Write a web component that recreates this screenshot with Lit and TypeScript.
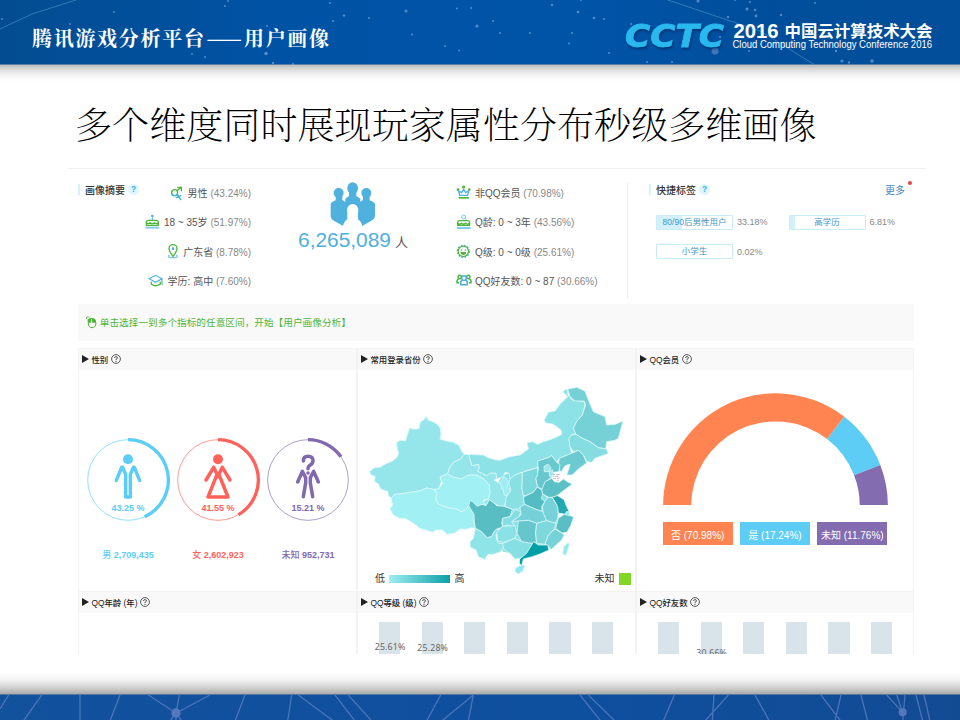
import { LitElement, html, svg, css, nothing } from "lit";
import { customElement, property } from "lit/decorators.js";

const GREEN = "#4db53c";
const BLUE = "#4fb0dc";

/* ---------- icons ---------- */
const icons: Record<string, { box: string; w: number; h: number; art: unknown }> = {
  gender: {
    box: "300 72 42 48", w: 14, h: 16,
    art: svg`<g fill="none" stroke-width="4">
      <circle cx="314" cy="95" r="9" stroke=${GREEN}/><path d="M320 89L332 80M322 79H334V91" stroke=${GREEN}/>
      <path d="M305 96A9 9 0 0 0 322 99L330 112M317 111L334 103M320 103L334 117" stroke=${BLUE}/></g>`,
  },
  cake: {
    box: "227 163 45 45", w: 15, h: 15,
    art: svg`<circle cx="249" cy="169" r="4" fill=${BLUE}/><path d="M249 173V182" stroke=${BLUE} stroke-width="3"/>
      <path d="M231 198V188Q231 182 238 182H260Q267 182 267 188V198M231 189Q237 195 242 189Q249 195 255 189Q262 195 267 189M231 197H267" fill="none" stroke=${GREEN} stroke-width="4"/>
      <rect x="228" y="201" width="42" height="6" fill="#86cbea"/>`,
  },
  pin: {
    box: "290 250 35 45", w: 11.7, h: 15,
    art: svg`<path d="M297 283Q290 290 300 291H315Q325 290 318 283" fill="none" stroke="#7cc6e6" stroke-width="4"/>
      <path d="M308 287Q296 271 296 264A12 12 0 0 1 320 264Q320 271 308 287Z" fill="#fff" stroke=${GREEN} stroke-width="4"/>
      <circle cx="308" cy="264" r="4" fill=${BLUE}/>`,
  },
  hat: {
    box: "239 339 46 40", w: 15.3, h: 13.3,
    art: svg`<path d="M249 362V369Q262 380 276 369V362" fill="none" stroke=${GREEN} stroke-width="4"/>
      <path d="M242 353L262 343L281 353L262 364ZM281 354V373" fill="none" stroke=${BLUE} stroke-width="3.5"/>`,
  },
  crown: {
    box: "138 76 46 44", w: 15.3, h: 14.7,
    art: svg`<g fill=${GREEN}><circle cx="161" cy="82" r="4.5"/><circle cx="144" cy="90" r="4"/><circle cx="178" cy="90" r="4"/><rect x="146" y="112" width="31" height="5"/></g>
      <path d="M149 107L146 94L155 99L161 89L167 99L176 94L173 107Z" fill="none" stroke=${BLUE} stroke-width="4"/>`,
  },
  qcake: {
    box: "138 162 46 47", w: 15.3, h: 15.7,
    art: svg`<circle cx="161" cy="171" r="6" fill="none" stroke="#7cc6e6" stroke-width="3"/><path d="M163 173L169 179" stroke="#7cc6e6" stroke-width="3"/>
      <path d="M143 197V188Q143 182 150 182H172Q179 182 179 188V197M143 190Q150 195 155 190Q161 195 167 190Q173 195 179 190M142 196H180" fill="none" stroke=${GREEN} stroke-width="4"/>
      <rect x="141" y="201" width="41" height="6" fill="#86cbea"/>`,
  },
  smile: {
    box: "139 251 44 44", w: 14.7, h: 14.7,
    art: svg`<circle cx="161" cy="273" r="18" fill="none" stroke=${BLUE} stroke-width="4" stroke-dasharray="5 4.4"/>
      <circle cx="161" cy="273" r="15.5" fill="none" stroke=${GREEN} stroke-width="3.5"/>
      <circle cx="155" cy="269" r="2.2" fill=${GREEN}/><circle cx="167" cy="269" r="2.2" fill=${GREEN}/>
      <path d="M152 275H170Q168 284 161 284Q154 284 152 275Z" fill=${GREEN}/>`,
  },
  friends: {
    box: "137 343 48 37", w: 16, h: 12.3,
    art: svg`<g fill="none" stroke-width="4.500"><g stroke=${GREEN}><circle cx="148" cy="352" r="5"/><path d="M145 357Q138 362 140 369H146"/>
      <circle cx="174" cy="352" r="5"/><path d="M177 357Q184 362 182 369H176"/></g>
      <g stroke=${BLUE}><circle cx="161" cy="355" r="7"/><path d="M156 361Q149 366 151 375H171Q173 366 166 361"/></g></g>`,
  },
  mouse: {
    box: "47 465 34 38", w: 11.3, h: 12.7,
    art: svg`<path d="M54 480Q54 472 65 472Q77 473 77 486Q76 500 65 500Q54 500 54 486Z" fill="none" stroke=${GREEN} stroke-width="3"/>
      <path d="M65 472H68Q77 473 77 485H65ZM51 476L62 471V485H54Z" fill=${GREEN}/><path d="M49 474V468M49 468H57" stroke=${GREEN} stroke-width="2.5"/>`,
  },
  people: {
    box: "780 68 136 134", w: 45.3, h: 44.7,
    art: svg`<g fill="#4fb1dd"><circle cx="806" cy="101" r="15"/><circle cx="889" cy="101" r="15"/>
      <path d="M797 111H817V122L832 132V196L818 199L788 182Q782 178 782 170V134Q782 130 797 123ZM899 111H879V122L864 132V196L878 199L908 182Q915 178 915 170V134Q915 130 899 123Z"/>
      <ellipse cx="848" cy="87" rx="16" ry="18"/><path d="M837 98H859V110L871 118V165H826V118L837 110Z"/></g>
      <path d="M819 202Q822 182 838 177V171Q831 166 831 153A17 19 0 0 1 865 153Q865 166 858 171V177Q874 182 877 202Z" fill="#fff"/>`,
  },
};

@customElement("ui-icon")
export class UiIcon extends LitElement {
  @property() name = "";
  static styles = css`:host { display: flex; flex: none; } svg { display: block; }`;
  render() {
    const i = icons[this.name];
    return i ? html`<svg viewBox=${i.box} width=${i.w} height=${i.h}>${i.art}</svg>` : nothing;
  }
}

/* ---------- province shapes ---------- */
const west: [string, string][] = [
  ["#94e6eb", "M198 123L204 135 218 140 232 148 241 160 243 178 240 192 258 198 278 201 296 210 306 230 313 238 302 252 280 262 268 280 263 296 240 306 244 320 236 342 222 343 200 339 178 348 150 352 128 356 105 358 93 369 85 362 84 350 62 342 55 326 44 320 45 304 32 299 29 289 44 278 60 277 78 266 98 258 110 248 116 236 112 222 110 202 122 196 136 198 142 180 148 160 166 163 178 160 180 142 192 134Z"],
  ["#a0f0f4", "M93 369L105 358 128 356 150 352 178 348 200 339 222 343 230 355 228 375 236 388 262 397 290 402 305 410 318 402 328 392 334 405 342 418 343 440 346 460 332 458 318 463 300 462 284 474 262 478 246 464 224 466 220 472 200 466 180 460 165 448 150 438 135 430 118 430 100 420 90 402 98 390Z"],
  ["#a0f0f4", "M240 306L263 296 280 306 305 311 320 302 335 299 350 300 370 310 388 330 390 352 386 372 370 375 378 392 366 388 352 394 345 388 330 376 326 392 318 402 305 410 290 402 262 397 236 388 228 375 230 355 222 343 236 342 248 325Z"],
  ["#94e6eb", "M313 238L326 238 330 252 336 272 356 268 358 280 352 288 368 296 380 302 392 294 408 294 410 310 402 316 414 322 428 324 424 340 434 350 440 360 438 378 432 394 418 394 402 384 388 374 378 392 370 378 386 372 390 352 388 330 370 310 350 300 335 299 320 302 305 311 280 306 263 296 268 280 280 262 302 252Z"],
  ["#8fe4e8", "M346 460L362 468 372 478 382 488 395 484 402 470 410 462 425 470 408 478 410 492 415 505 432 506 430 515 422 530 400 538 385 538 378 545 376 554 355 545 348 525 330 516 330 500 340 490Z"],
  ["#59bec4", "M330 376L338 380 345 388 352 394 366 388 378 392 388 374 402 384 410 392 432 394 457 403 450 425 430 430 425 445 430 456 410 462 402 470 395 484 382 488 372 478 362 468 346 460 343 440 342 418 326 392Z"],
];
const east: [string, string][] = [
  ["#8ce2e6", "M-79 238L-60 239 -35 240 -20 248 0 254 15 256 45 245 75 240 100 222 96 203 112 200 128 208 145 200 160 196 180 188 200 178 198 165 185 155 175 148 150 143 148 135 160 112 180 108 195 88 205 78 218 65 204 50 212 42 218 46 218 58 232 75 268 80 270 90 262 120 245 140 235 160 243 175 230 180 222 190 225 215 230 235 205 245 193 250 185 262 170 242 160 248 130 258 128 278 100 285 82 292 60 300 45 312 42 295 30 292 24 305 5 312 3 294 -13 294 -25 302 -37 296 -53 288 -47 280 -49 268 -69 272 -75 252Z"],
  ["#76d1d7", "M218 42L245 37 270 48 280 75 295 110 330 125 335 150 360 148 384 138 378 160 370 190 360 196 335 200 332 222 310 218 285 200 262 190 243 178 235 160 245 140 262 120 272 90 268 78 240 78 225 65Z"],
  ["#85dde1", "M243 178L262 190 285 200 310 218 335 222 340 235 320 243 300 250 290 262 275 260 265 240 250 226 235 230 225 215 222 190 230 180Z"],
  ["#6ccbd0", "M193 250L230 235 250 226 265 240 275 264 250 282 232 300 215 300 222 280 225 268 210 272 198 292 188 275Z"],
  ["#68c8cd", "M128 258L160 248 170 242 185 262 195 268 192 290 175 292 170 307 150 322 145 344 127 336 122 310 130 285Z"],
  ["#99e9ed", "M147 275L158 267 168 278 162 290 148 290Z"],
  ["#99e9ed", "M162 290L172 284 176 300 165 306Z"],
  ["#5cc1c7", "M150 320L170 310 178 320 192 322 205 312 220 322 232 327 215 340 195 355 180 367 160 367 142 356 140 345Z"],
  ["#7cd8dd", "M82 292L128 278 128 300 122 310 127 336 115 352 85 364 80 340Z"],
  ["#88dfe4", "M45 312L60 300 82 292 80 340 85 364 88 388 70 402 52 403 30 393 33 368 48 345 42 325Z"],
  ["#9dedf2", "M14 324L28 304 42 320 36 336 48 345 36 362 28 360 24 342Z"],
  ["#56bcc3", "M85 366L115 352 127 336 140 345 143 360 138 370 150 380 140 395 142 410 120 402 88 388Z"],
  ["#75d1d7", "M75 396L88 388 120 402 145 410 155 437 125 445 100 436 70 438 50 440 78 420Z"],
  ["#86dde2", "M22 430L45 425 60 403 78 410 72 425 50 440 60 456 40 450 22 454Z"],
  ["#76d2d8", "M150 378L160 367 172 368 188 395 190 412 188 430 180 445 155 437 145 415 142 395Z"],
  ["#25a8af", "M172 366L188 362 207 374 215 395 222 408 212 418 190 414 188 395Z"],
  ["#9decef", "M214 410L225 410 222 424 210 420Z"],
  ["#5abfc5", "M190 430L208 418 236 425 228 450 216 472 200 474 182 460Z"],
  ["#65c6cb", "M70 438L100 436 125 445 122 475 125 500 108 508 80 500 66 475Z"],
  ["#7cd8dc", "M125 445L155 437 182 445 178 462 162 478 150 508 125 505 122 475Z"],
  ["#76d2d7", "M180 462L200 474 208 480 200 495 168 524 160 513 150 506 160 480Z"],
  ["#8be1e5", "M5 472L22 454 60 452 66 475 60 490 25 502 8 498Z"],
  ["#86dfe3", "M22 506L60 490 80 500 112 505 108 525 90 548 60 552 45 535 28 525Z"],
  ["#009ea6", "M110 510L116 500 130 510 158 510 162 525 135 537 112 545 85 552 80 572 73 565 74 552 95 535 104 520Z"],
  ["#94e9ed", "M220 502L223 510 212 542 203 536 206 516Z"],
  ["#91e7eb", "M61 580L75 571 90 571 84 588 70 597 60 590Z"],
];

@customElement("china-map")
export class ChinaMap extends LitElement {
  static styles = css`:host, svg { display: block; }`;
  render() {
    const p = ([fill, d]: [string, string]) => svg`<path d=${d} fill=${fill} stroke="#dcf8f9" stroke-width="2.4" stroke-linejoin="round"/>`;
    return html`<svg width="275" height="203" viewBox="0 0 825 609">
      <path d="M414 322L430 300 530 270 575 280 545 350 590 400 600 450 560 515 500 545 430 530 410 500 430 450Z" fill="#8be1e5"/>
      ${west.map(p)}<g transform="translate(405 0)">${east.map(p)}
      <g fill="#c4bfc4"><path d="M173 297h8v3h-8zM184 297h10v3h-10zM173 303h5v3h-5zM181 302h9v4h-9zM175 309h8v3h-8zM186 308h8v3h-8zM186 314h5v3h-5z"/></g></g>
    </svg>`;
  }
}

/* ---------- charts ---------- */
const polar = (cx: number, cy: number, r: number, deg: number) => {
  const a = (deg * Math.PI) / 180;
  return `${(cx + r * Math.sin(a)).toFixed(2)} ${(cy - r * Math.cos(a)).toFixed(2)}`;
};

const figures: Record<string, unknown> = {
  male: svg`<circle cx="173" cy="359" r="15"/><path d="M138 422L154 383H157L166 404V472H180V404L189 383H192L208 422" class="l"/>`,
  female: svg`<circle cx="443" cy="359" r="15"/><path d="M407 421L430 383L443 410L456 383L479 421M440 405L413 472H473L446 405" class="l"/>`,
  unknown: svg`<path d="M699 364Q699 350 713 350Q728 350 728 363Q728 371 720 376Q713 380 713 387" class="l"/><circle cx="713" cy="400" r="5.500"/>
    <path d="M682 427L696 395L706 414V430L699 471M744 427L730 395L720 414V430L727 471" class="l"/>`,
};

@customElement("gender-ring")
export class GenderRing extends LitElement {
  @property() kind = "male";
  @property() color = "";
  @property({ type: Number }) pct = 0;
  @property({ type: Number }) cx = 0;
  @property() label = "";
  static styles = css`
    :host { display: flex; flex-direction: column; align-items: center; width: 90px; }
    .ring { display: block; }
    .l { fill: none; stroke: currentColor; stroke-width: 10.5; stroke-linejoin: round; stroke-linecap: round; }
    .pct { font-weight: 700; font-size: 9px; line-height: 10px; margin-top: -19px; height: 10px; }
    .name { font-weight: 700; font-size: 9px; line-height: 12px; margin-top: 35.5px; white-space: nowrap; }
    .name b { font-weight: 500; }
  `;
  render() {
    const c = this.cx, big = this.pct > 50 ? 1 : 0;
    const [n, v] = this.label.split(" ");
    return html`<svg class="ring" width="84" height="84" viewBox="${c - 126} 295 252 252" style="color:${this.color}" fill="currentColor">
        <circle cx=${c} cy="421" r="121" fill="none" stroke="currentColor" stroke-width="2.6" opacity="0.75"/>
        <path d="M${c} 300A121 121 0 ${big} 1 ${polar(c, 421, 121, this.pct * 3.6)}" fill="none" stroke="currentColor" stroke-width="10"/>
        ${figures[this.kind]}
      </svg>
      <span class="pct" style="color:${this.color}">${this.pct.toFixed(2)} %</span>
      <span class="name" style="color:${this.color}"><b>${n}</b> ${v}</span>`;
  }
}

const member = [
  { name: "否", pct: 70.98, color: "#ff8452" },
  { name: "是", pct: 17.24, color: "#5ecdf6" },
  { name: "未知", pct: 11.76, color: "#836db0" },
];

@customElement("half-donut")
export class HalfDonut extends LitElement {
  static styles = css`
    :host { display: block; width: 225px; }
    svg { display: block; }
    .keys { display: flex; justify-content: space-between; margin-top: 17px; }
    .key { width: 70.4px; height: 22.6px; line-height: 27px; text-align: center; color: #fff; font-size: 10px; white-space: nowrap; }
  `;
  render() {
    let at = -90;
    return html`<svg width="225" height="112.7" viewBox="0 0 225 112.7">${member.map((m, i) => {
      const end = i === 2 ? 90 : at + m.pct * 1.8, a = at;
      at = end;
      return svg`<path fill=${m.color} d="M${polar(112.5, 112.7, 112.4, a)}A112.4 112.4 0 0 1 ${polar(112.5, 112.7, 112.4, end)}L${polar(112.5, 112.7, 84.3, end)}A84.3 84.3 0 0 0 ${polar(112.5, 112.7, 84.3, a)}Z"/>`;
    })}</svg>
    <div class="keys">${member.map((m) => html`<span class="key" style="background:${m.color}">${m.name} (${m.pct}%)</span>`)}</div>`;
  }
}

/* ---------- page ---------- */
const stars: [number, number, number][] = [
  [2, 19, 1], [114, 12, 1], [70, 24, 1], [225, 6, 1], [228, 1, 1], [330, 3, 1], [344, 15.5, 1.2], [333, 21, 1], [369, 18, 1], [406, 11, 1.5],
  [412, 34.5, 1], [445, 46, 1], [459, 50.5, 1], [457, 8.5, 1], [471, 8, 1], [477, 26, 1.6], [266, 53.5, 1.8], [273, 63, 1.2], [293, 64, 1], [192, 54, 1], [205, 57, 1], [267, 26, 1],
  [493, 21, 1], [500, 33, 1], [530, 33, 1], [552, 5, 1.2], [578, 12, 1.3], [594, 18, 1.3], [604, 19, 1], [572, 33, 1], [569, 43.5, 1], [609, 53, 1], [647, 62, 1], [672, 62, 1], [581, 0, 1],
  [698, 1, 1.5], [631, 24, 1], [728, 17, 1.2], [747, 9, 1.5], [750, 2, 1], [755, 10, 1.2], [756, 16, 1.4], [735, 0, 1], [781, 15, 1.2], [815, 3, 1], [842, 61, 1.6], [849, 62.5, 1.2], [872, 61, 1.8], [749, 51, 1], [836, 51, 1.2], [720, 37, 1],
];

@customElement("app-root")
export class AppRoot extends LitElement {
  static styles = css`
    :host { display: block; font-family: "Liberation Sans", "Noto Sans CJK SC", sans-serif; color: #555; }
    .slide { width: 960px; height: 720px; display: flex; flex-direction: column; overflow: hidden; background: #fff; }
    header { position: relative; height: 65px; flex: none; background: linear-gradient(90deg, #034c91, #0052a4 28%, #0054a8 60%, #004e9b 80%, #034e9a); display: flex; justify-content: space-between; box-sizing: border-box; border-bottom: 1px solid #5c83a9; }
    .sky { position: absolute; inset: 0; }
    .title { position: relative; margin: 24.5px 0 0 32px; color: #fff; font: 700 20px/26px "Noto Serif CJK SC", "Noto Sans CJK SC", serif; letter-spacing: 1.7px; white-space: nowrap; height: 26px; }
    .dash { letter-spacing: -1px; margin-right: 3px; margin-left: 1px; }
    .logo { position: relative; }
    .cctc { font: italic 700 31.5px "DejaVu Sans", sans-serif; fill: #29b9ef; stroke: #29b9ef; stroke-width: .8px; filter: drop-shadow(1px 2px 1px rgba(0, 30, 80, .5)); }
    .conf { font-weight: 700; fill: #fff; }
    .en { font-size: 10px; fill: #fff; }
    main { height: 629px; flex: none; display: flex; flex-direction: column; background: linear-gradient(#bbb, #d9d9d9 4px, #f4f4f4 10px, #fff 17px, #fff 607px, #f2f2f2 615px, #cfcfcf 623px, #aaa 629px); }
    h1 { margin: 30px 0 0 75px; font: 200 37.1px/56px "Noto Serif CJK SC", "Noto Sans CJK SC", serif; color: #000; white-space: nowrap; height: 56px; }
    .board { margin: 17px 35px 0 68px; border-top: 1px solid #eee; padding: 0 11.5px 0 10px; height: 486px; overflow: hidden; background: #fff; box-sizing: border-box; }
    .summary { display: flex; height: 135px; }
    .cap { display: flex; align-items: center; height: 10px; margin-top: 15.5px; font-size: 10px; color: #333; font-weight: 500; white-space: nowrap; }
    .cap::before { content: ""; width: 2px; height: 10.5px; background: #d4f1fc; margin-right: 5px; flex: none; }
    .q { width: 11px; height: 11px; border-radius: 50%; background: #dff5fd; color: #35b2e2; font-size: 8.5px; line-height: 11px; font-weight: 700; text-align: center; margin-left: 3px; }
    .c1 { width: 66px; }
    .list { padding-top: 9px; font-size: 10px; display: flex; flex-direction: column; }
    .list.r { width: 107px; }
    .row { display: flex; align-items: center; height: 29.3px; white-space: nowrap; }
    .r .row { justify-content: flex-end; gap: 4px; }
    .l { width: 171px; }
    .l ui-icon { width: 19px; }
    .pc { color: #888; }
    .total { width: 205px; display: flex; flex-direction: column; align-items: center; padding-top: 13px; }
    .total ui-icon { margin-right: 2px; }
    .num { display: flex; align-items: baseline; color: #4fb0dc; font-size: 20.9px; line-height: 26px; gap: 4px; margin-left: -1px; }
    .num small { font-size: 13px; color: #555; }
    .tags { border-left: 1px solid #eee; width: 262px; margin: 13.5px 0 5px; padding-left: 21px; height: 116px; }
    .tags .cap { margin-top: 2px; }
    .more { color: #4a85c5; font-weight: 400; margin-left: auto; position: relative; }
    .cap .more::after { content: ""; position: absolute; width: 4px; height: 4px; border-radius: 50%; background: #e04848; left: 23px; top: -1px; }
    .tagrow { width: 256px; }
    .grid { display: grid; grid-template-columns: 132.5px 120px; row-gap: 13.8px; margin: 20px 0 0 7px; }
    .tag { display: flex; align-items: center; gap: 4px; font-size: 9px; color: #888; }
    .box { width: 75px; height: 13.5px; border: 1px solid #c9ecf8; line-height: 13.5px; text-align: center; color: #3c98c5; border-radius: 1px; font-size: 8.5px; white-space: nowrap; }
    .note { height: 36.5px; background: #f9f9f9; display: flex; align-items: center; padding-left: 7.5px; gap: 3px; color: #4db53c; font-size: 9.67px; white-space: nowrap; }
    .cards { display: grid; grid-template-columns: 279px 279px 277.5px; grid-template-rows: 243.5px 64px; margin-top: 7px; }
    .card { border: 1px solid #f3f3f3; border-bottom-width: 0; box-sizing: border-box; overflow: hidden; min-width: 0; }
    .head { height: 21px; background: #f9f9f9; display: flex; align-items: center; padding: 0 0 1px 3px; box-sizing: border-box; gap: 2.4px; font-size: 8.4px; font-weight: 500; color: #222; white-space: nowrap; }
    .head svg { flex: none; }
    .rings { display: flex; margin: 68.5px 0 0 4px; }
    .map { margin: 5px 0 0 2px; }
    .scale { display: flex; align-items: center; font-size: 10px; height: 12.5px; margin: -4.7px 4px 0 17px; color: #333; line-height: 12px; }
    .ramp { width: 61px; height: 8px; margin: 0 4.5px 0 4px; background: linear-gradient(90deg, #9eeef2, #0d9fa7); }
    .none { margin-left: auto; }
    .sw { width: 12.5px; height: 12.5px; background: #82d628; margin-left: 4px; }
    half-donut { margin: 23px 0 0 25.5px; }
    .bars { display: flex; gap: 21.4px; margin: 8.5px 0 0 21px; }
    .bar { width: 21.2px; height: 34px; box-sizing: border-box; background: #d9e4ea; display: flex; justify-content: center; font: 8.8px/12px "Noto Sans", sans-serif; letter-spacing: .15px; color: #666; flex: none; }
    .bar span { position: relative; left: .5px; }
    footer { flex: 1; background: linear-gradient(90deg, #12519c, #0e4f9e 60%, #134b93); border-top: 1px solid #58789c; box-sizing: border-box; }
    footer svg { display: block; }
  `;

  private row(icon: string, text: string, pct: string) {
    return html`<div class="row"><ui-icon name=${icon}></ui-icon><span>${text} <span class="pc">(${pct})</span></span></div>`;
  }

  private head(text: string) {
    return html`<div class="head"><svg width="7" height="8"><path d="M0 0L7 4L0 8Z" fill="#222"/></svg><span>${text}</span>
      <svg width="10" height="10" viewBox="0 0 10 10" fill="none" stroke="#444" stroke-width=".9"><circle cx="5" cy="5" r="4.4"/><path d="M3.5 4Q3.5 2.6 5 2.6Q6.5 2.6 6.5 3.9Q6.5 4.7 5 5.3V6.3M5 7V8"/></svg></div>`;
  }

  private tag(name: string, pct: number) {
    return html`<div class="tag"><span class="box" style="background:linear-gradient(90deg,#d4f1fb ${pct}%,#fff ${pct}%)">${name}</span>${pct.toFixed(2)}%</div>`;
  }

  private bars(labels: [string, number][]) {
    return html`<div class="bars">${Array.from({ length: 6 }, (_, i) => {
      const l = labels[i];
      return html`<div class="bar" style="padding-top:${l ? l[1] : 0}px">${l ? html`<span>${l[0]}</span>` : nothing}</div>`;
    })}</div>`;
  }

  render() {
    return html`<div class="slide">
      <header>
        <svg class="sky" width="960" height="65"><path d="M0 29L32 14L76 0" stroke="#3d86bd" stroke-width=".8" fill="none"/>
          <path d="M665 -1L760 31L815 65" stroke="#3d86bd" stroke-width=".8" fill="none"/>
          ${stars.map(([x, y, r]) => svg`<circle cx=${x} cy=${y} r=${r} fill="#86b4e6" opacity=".6"/>`)}
          <circle cx="715" cy="51" r="3.5" fill="#9fb4e8" opacity=".4"/></svg>
        <div class="title">腾讯游戏分析平台<span class="dash">——</span>用户画像</div>
        <svg class="logo" width="340" height="64" viewBox="620 0 340 64">
          <text class="cctc" x="625" y="47" textLength="99" lengthAdjust="spacingAndGlyphs">CCTC</text>
          <text class="conf" x="733.5" y="37.5" font-size="20" textLength="45" lengthAdjust="spacingAndGlyphs">2016</text>
          <text class="conf" x="784.5" y="36.5" font-size="16.4" textLength="148" lengthAdjust="spacingAndGlyphs">中国云计算技术大会</text>
          <text class="en" x="732.5" y="48" textLength="199.5" lengthAdjust="spacingAndGlyphs">Cloud Computing Technology Conference 2016</text>
        </svg>
      </header>
      <main>
        <h1>多个维度同时展现玩家属性分布秒级多维画像</h1>
        <section class="board">
          <div class="summary">
            <div class="c1"><div class="cap">画像摘要<span class="q">?</span></div></div>
            <div class="list r">
              ${this.row("gender", "男性", "43.24%")}${this.row("cake", "18 ~ 35岁", "51.97%")}
              ${this.row("pin", "广东省", "8.78%")}${this.row("hat", "学历: 高中", "7.60%")}
            </div>
            <div class="total"><ui-icon name="people"></ui-icon><div class="num">6,265,089<small>人</small></div></div>
            <div class="list l">
              ${this.row("crown", "非QQ会员", "70.98%")}${this.row("qcake", "Q龄: 0 ~ 3年", "43.56%")}
              ${this.row("smile", "Q级: 0 ~ 0级", "25.61%")}${this.row("friends", "QQ好友数: 0 ~ 87", "30.66%")}
            </div>
            <div class="tags">
              <div class="cap tagrow">快捷标签<span class="q">?</span><span class="more">更多</span></div>
              <div class="grid">${this.tag("80/90后男性用户", 33.18)}${this.tag("高学历", 6.81)}${this.tag("小学生", 0.02)}</div>
            </div>
          </div>
          <div class="note"><ui-icon name="mouse"></ui-icon>单击选择一到多个指标的任意区间，开始【用户画像分析】</div>
          <div class="cards">
            <div class="card">${this.head("性别")}
              <div class="rings">
                <gender-ring kind="male" color="#5ccdf6" cx="173" pct="43.25" label="男 2,709,435"></gender-ring>
                <gender-ring kind="female" color="#ff625b" cx="443" pct="41.55" label="女 2,602,923"></gender-ring>
                <gender-ring kind="unknown" color="#8069ae" cx="713" pct="15.21" label="未知 952,731"></gender-ring>
              </div>
            </div>
            <div class="card">${this.head("常用登录省份")}
              <china-map class="map"></china-map>
              <div class="scale">低<span class="ramp"></span>高<span class="none">未知</span><span class="sw"></span></div>
            </div>
            <div class="card">${this.head("QQ会员")}<half-donut></half-donut></div>
            <div class="card">${this.head("QQ年龄 (年)")}</div>
            <div class="card">${this.head("QQ等级 (级)")}${this.bars([["25.61%", 19], ["25.28%", 20.5]])}</div>
            <div class="card">${this.head("QQ好友数")}${this.bars([["", 0], ["30.66%", 25]])}</div>
          </div>
        </section>
      </main>
      <footer><svg width="960" height="26" viewBox="0 0 2880 78" fill="none" stroke="#5d7fc4" stroke-width="4" opacity=".75">
        <path d="M240 0V78M360 0L330 78M445 0L528 54L630 0M538 0L528 54L510 78M528 54V78M528 54L545 78M735 0L705 78M875 0L863 78M895 0L1000 78M1005 0L1065 78M1045 0L1115 78M1322 0L1280 78M1420 0L1325 78M1420 0L1405 78M1740 0L1802 78M1765 0L1845 78M2023 0L1990 78M2142 0L2137 78M2185 0L2115 78M2265 0L2308 78M2463 0L2522 78M2523 0L2505 78M2583 0L2603 78M2660 0L2708 52L2690 0M2715 0L2708 78M2748 0L2768 78M2772 0L2790 78M0 42L26 0M125 0L70 78"/>
        <g fill="#6b85c9" stroke="none"><circle cx="528" cy="54" r="14"/><circle cx="2708" cy="52" r="12"/></g></svg></footer>
    </div>`;
  }
}
